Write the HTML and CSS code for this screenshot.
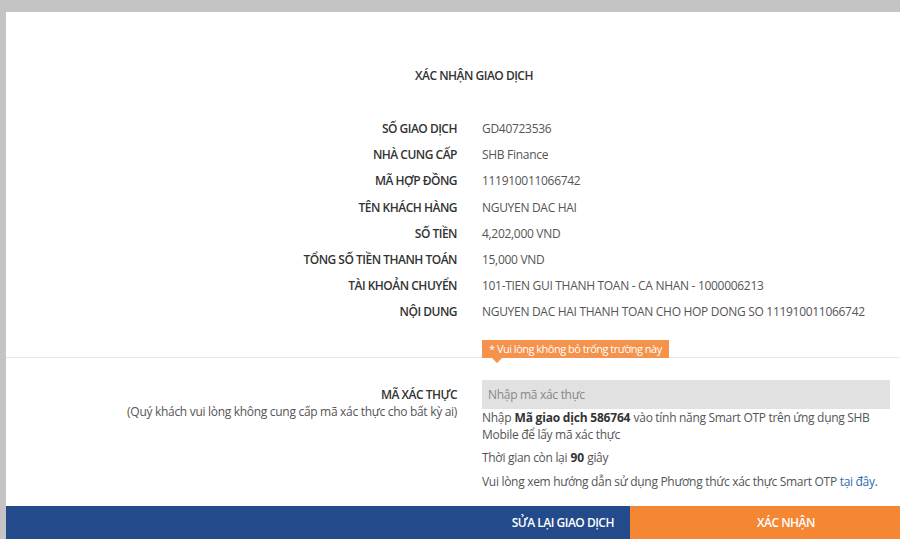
FILE: index.html
```html
<!DOCTYPE html>
<html lang="vi">
<head>
<meta charset="UTF-8">
<meta name="viewport" content="width=device-width, initial-scale=1.0">
<title>Xác nhận giao dịch</title>
<link rel="stylesheet" href="styles.css">
</head>
<body>
<div class="panel">
    <h1 class="title">XÁC NHẬN GIAO DỊCH</h1>

    <div class="details">
        <div class="label">SỐ GIAO DỊCH</div><div class="value">GD40723536</div>
        <div class="label">NHÀ CUNG CẤP</div><div class="value">SHB Finance</div>
        <div class="label">MÃ HỢP ĐỒNG</div><div class="value">111910011066742</div>
        <div class="label">TÊN KHÁCH HÀNG</div><div class="value">NGUYEN DAC HAI</div>
        <div class="label">SỐ TIỀN</div><div class="value">4,202,000 VND</div>
        <div class="label">TỔNG SỐ TIỀN THANH TOÁN</div><div class="value">15,000 VND</div>
        <div class="label">TÀI KHOẢN CHUYỂN</div><div class="value">101-TIEN GUI THANH TOAN - CA NHAN - 1000006213</div>
        <div class="label">NỘI DUNG</div><div class="value">NGUYEN DAC HAI THANH TOAN CHO HOP DONG SO 111910011066742</div>
    </div>

    <div class="auth">
        <div class="auth-label">
            <div class="label">MÃ XÁC THỰC</div>
            <div class="note">(Quý khách vui lòng không cung cấp mã xác thực cho bất kỳ ai)</div>
        </div>
        <div class="field">
            <div class="tooltip">* Vui lòng không bỏ trống trường này</div>
            <input class="otp" type="text" placeholder="Nhập mã xác thực">
            <p class="help">Nhập <b>Mã giao dịch 586764</b> vào tính năng Smart OTP trên ứng dụng SHB Mobile để lấy mã xác thực</p>
            <p class="help">Thời gian còn lại <b>90</b> giây</p>
            <p class="help">Vui lòng xem hướng dẫn sử dụng Phương thức xác thực Smart OTP <a href="#">tại đây</a>.</p>
        </div>
    </div>

    <div class="actions">
        <button class="btn btn-back">SỬA LẠI GIAO DỊCH</button>
        <button class="btn btn-confirm">XÁC NHẬN</button>
    </div>
</div>
</body>
</html>
```

FILE: styles.css
```css
body {
    margin: 0;
    background-color: #c4c4c4;
    font-family: 'Open Sans', 'Liberation Sans', sans-serif;
    font-size: 12px;
    color: #555;
    letter-spacing: -0.3px;
    overflow: hidden;
}
.panel {
    margin: 12px 0 0 6px;
    width: 936px;
    background-color: #ffffff;
}
.title {
    margin: 0;
    padding-top: 54px;
    font-size: 12px;
    font-weight: 600;
    line-height: 20px;
    color: #333;
    text-align: center;
    letter-spacing: -0.5px;
}
.details {
    display: grid;
    grid-template-columns: 451px 1fr;
    column-gap: 25px;
    margin-top: 30px;
    line-height: 26.2px;
}
.label {
    text-align: right;
    font-weight: 600;
    color: #333;
    letter-spacing: -0.5px;
}
.value {
    color: #555;
}
.auth {
    display: grid;
    grid-template-columns: 451px 408px;
    column-gap: 25px;
    margin-top: 31px;
    padding-top: 22px;
    border-top: 1px solid #e8e8e8;
}
.auth-label {
    padding-top: 6px;
    line-height: 17px;
}
.note {
    text-align: right;
    color: #555;
}
.field {
    position: relative;
}
.tooltip {
    position: absolute;
    left: 0;
    top: -40px;
    height: 18px;
    padding: 0 7px;
    line-height: 18px;
    font-size: 11px;
    letter-spacing: -0.5px;
    color: #fff;
    background-color: #f5924b;
    white-space: nowrap;
}
.tooltip::after {
    content: "";
    position: absolute;
    left: 10px;
    top: 18px;
    border-left: 5px solid transparent;
    border-right: 5px solid transparent;
    border-top: 5px solid #f5924b;
}
.otp {
    display: block;
    box-sizing: border-box;
    width: 408px;
    height: 29px;
    padding: 0 6px;
    border: none;
    background-color: #e1e1e1;
    font-family: inherit;
    font-size: 12px;
    letter-spacing: -0.3px;
    color: #555;
    outline: none;
}
.otp::placeholder {
    color: #888;
}
.help {
    margin: 0 0 6.5px;
    line-height: 17px;
    color: #555;
}
.help b {
    font-weight: 700;
    color: #333;
    letter-spacing: -0.2px;
    margin: 0 0.5px;
}
.help a {
    color: #2d6cb4;
    text-decoration: none;
}
.actions {
    display: flex;
    margin-top: 10px;
}
.btn {
    height: 33px;
    border: none;
    font-family: inherit;
    font-size: 12px;
    font-weight: 600;
    color: #fff;
    letter-spacing: -0.5px;
    cursor: pointer;
}
.btn-back {
    flex: 1;
    text-align: right;
    padding-right: 16px;
    background-color: #234a8a;
}
.btn-confirm {
    width: 312px;
    background-color: #f58634;
}
```
